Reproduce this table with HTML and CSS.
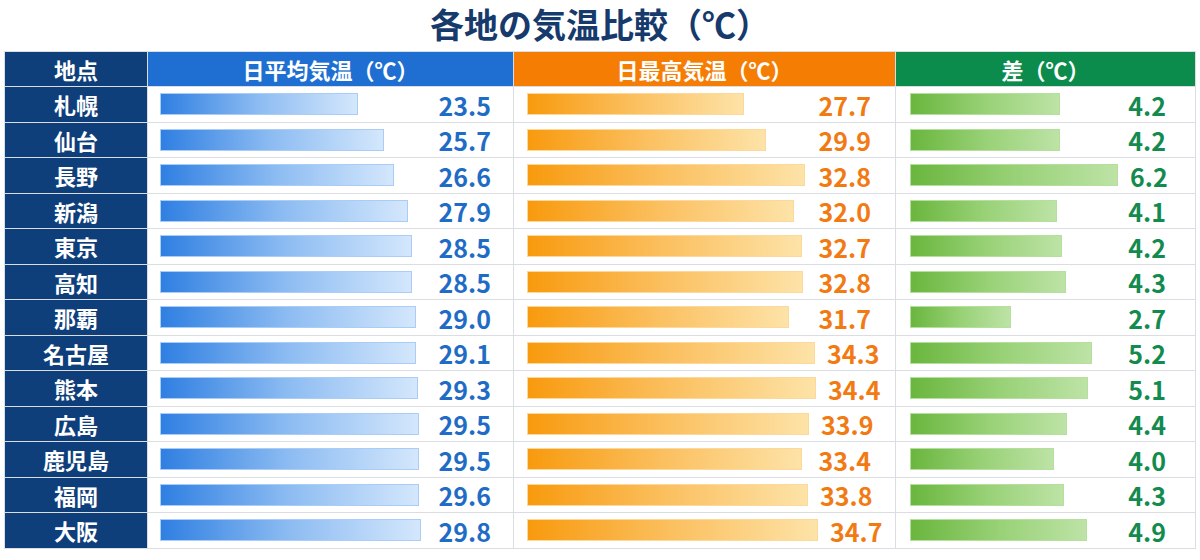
FILE: index.html
```html
<!DOCTYPE html>
<html lang="ja">
<head>
<meta charset="utf-8">
<title>各地の気温比較</title>
<link rel="stylesheet" href="styles.css">
</head>
<body>
<div class="page">
  <h1 class="title">各地の気温比較（℃）</h1>
  <div class="table">
    <div class="hd hd-loc">地点</div>
    <div class="hd hd-avg">日平均気温（℃）</div>
    <div class="hd hd-max">日最高気温（℃）</div>
    <div class="hd hd-diff">差（℃）</div>

    <div class="loc">札幌</div>
    <div class="cell avg"><span class="bar" style="width:198px"></span><span class="num">23.5</span></div>
    <div class="cell max"><span class="bar" style="width:217px"></span><span class="num">27.7</span></div>
    <div class="cell diff"><span class="bar" style="width:150px"></span><span class="num">4.2</span></div>

    <div class="loc">仙台</div>
    <div class="cell avg"><span class="bar" style="width:224px"></span><span class="num">25.7</span></div>
    <div class="cell max"><span class="bar" style="width:239px"></span><span class="num">29.9</span></div>
    <div class="cell diff"><span class="bar" style="width:150px"></span><span class="num">4.2</span></div>

    <div class="loc">長野</div>
    <div class="cell avg"><span class="bar" style="width:234px"></span><span class="num">26.6</span></div>
    <div class="cell max"><span class="bar" style="width:278px"></span><span class="num">32.8</span></div>
    <div class="cell diff"><span class="bar" style="width:208px"></span><span class="num">6.2</span></div>

    <div class="loc">新潟</div>
    <div class="cell avg"><span class="bar" style="width:248px"></span><span class="num">27.9</span></div>
    <div class="cell max"><span class="bar" style="width:267px"></span><span class="num">32.0</span></div>
    <div class="cell diff"><span class="bar" style="width:147px"></span><span class="num">4.1</span></div>

    <div class="loc">東京</div>
    <div class="cell avg"><span class="bar" style="width:252px"></span><span class="num">28.5</span></div>
    <div class="cell max"><span class="bar" style="width:275px"></span><span class="num">32.7</span></div>
    <div class="cell diff"><span class="bar" style="width:152px"></span><span class="num">4.2</span></div>

    <div class="loc">高知</div>
    <div class="cell avg"><span class="bar" style="width:252px"></span><span class="num">28.5</span></div>
    <div class="cell max"><span class="bar" style="width:276px"></span><span class="num">32.8</span></div>
    <div class="cell diff"><span class="bar" style="width:156px"></span><span class="num">4.3</span></div>

    <div class="loc">那覇</div>
    <div class="cell avg"><span class="bar" style="width:256px"></span><span class="num">29.0</span></div>
    <div class="cell max"><span class="bar" style="width:262px"></span><span class="num">31.7</span></div>
    <div class="cell diff"><span class="bar" style="width:101px"></span><span class="num">2.7</span></div>

    <div class="loc">名古屋</div>
    <div class="cell avg"><span class="bar" style="width:256px"></span><span class="num">29.1</span></div>
    <div class="cell max"><span class="bar" style="width:288px"></span><span class="num">34.3</span></div>
    <div class="cell diff"><span class="bar" style="width:182px"></span><span class="num">5.2</span></div>

    <div class="loc">熊本</div>
    <div class="cell avg"><span class="bar" style="width:258px"></span><span class="num">29.3</span></div>
    <div class="cell max"><span class="bar" style="width:289px"></span><span class="num">34.4</span></div>
    <div class="cell diff"><span class="bar" style="width:178px"></span><span class="num">5.1</span></div>

    <div class="loc">広島</div>
    <div class="cell avg"><span class="bar" style="width:259px"></span><span class="num">29.5</span></div>
    <div class="cell max"><span class="bar" style="width:282px"></span><span class="num">33.9</span></div>
    <div class="cell diff"><span class="bar" style="width:157px"></span><span class="num">4.4</span></div>

    <div class="loc">鹿児島</div>
    <div class="cell avg"><span class="bar" style="width:259px"></span><span class="num">29.5</span></div>
    <div class="cell max"><span class="bar" style="width:275px"></span><span class="num">33.4</span></div>
    <div class="cell diff"><span class="bar" style="width:144px"></span><span class="num">4.0</span></div>

    <div class="loc">福岡</div>
    <div class="cell avg"><span class="bar" style="width:259px"></span><span class="num">29.6</span></div>
    <div class="cell max"><span class="bar" style="width:281px"></span><span class="num">33.8</span></div>
    <div class="cell diff"><span class="bar" style="width:154px"></span><span class="num">4.3</span></div>

    <div class="loc">大阪</div>
    <div class="cell avg"><span class="bar" style="width:261px"></span><span class="num">29.8</span></div>
    <div class="cell max"><span class="bar" style="width:291px"></span><span class="num">34.7</span></div>
    <div class="cell diff"><span class="bar" style="width:177px"></span><span class="num">4.9</span></div>
  </div>
</div>
</body>
</html>
```
FILE: styles.css
```css
* { box-sizing: border-box; }
html, body {
  margin: 0;
  padding: 0;
  background: #ffffff;
}
body {
  font-family: "Noto Sans CJK JP", "Noto Sans", sans-serif;
  width: 1200px;
  height: 560px;
  overflow: hidden;
}
.page {
  padding: 0 4px;
}
.title {
  margin: 0;
  height: 51px;
  line-height: 48px;
  text-align: center;
  font-size: 34px;
  font-weight: 700;
  color: #163a6c;
}
.table {
  display: grid;
  grid-template-columns: 142px 365px 381px 299px;
  grid-template-rows: 34px repeat(13, 34.5px);
  gap: 1px;
  padding: 1px;
  background: #dadde2;
  width: 1192px;
}
.hd {
  display: flex;
  align-items: center;
  justify-content: center;
  color: #ffffff;
  font-size: 22px;
  font-weight: 700;
  line-height: 1;
}
.hd-loc { background: #0f3f7b; }
.hd-avg { background: #1f6fd2; }
.hd-max { background: #f67d04; }
.hd-diff { background: #0b8c4c; }
.loc {
  display: flex;
  align-items: center;
  justify-content: center;
  background: #0f3f7b;
  color: #ffffff;
  font-size: 22px;
  font-weight: 700;
  line-height: 1;
}
.cell {
  display: flex;
  align-items: center;
  gap: 12px;
  background: #ffffff;
  padding-top: 2px;
  overflow: visible;
  min-width: 0;
}
.bar {
  display: block;
  flex: 0 0 auto;
  height: 22px;
  margin-top: -2px;
  border: 1px solid;
}
.num {
  flex: 0 0 auto;
  margin-left: auto;
  font-size: 25px;
  font-weight: 700;
  line-height: 1;
}
.avg { padding-left: 12px; padding-right: 22px; }
.avg .bar {
  background: linear-gradient(90deg, #2f7fe2 0%, #8dbcf2 50%, #d4e7fc 100%);
  border-color: #a9cdf6;
}
.avg .num { color: #1f6cc6; }
.max { padding-left: 13px; padding-right: 24px; }
.max .bar {
  background: linear-gradient(90deg, #f89a0e 0%, #fbc060 50%, #fde3a8 100%);
  border-color: #fcd99a;
}
.max .num { color: #f27a12; }
.diff { padding-left: 14px; padding-right: 29px; }
.diff .bar {
  background: linear-gradient(90deg, #6ab63e 0%, #98d176 50%, #bde3a6 100%);
  border-color: #b5df9c;
}
.diff .num { color: #138b4e; }
```
